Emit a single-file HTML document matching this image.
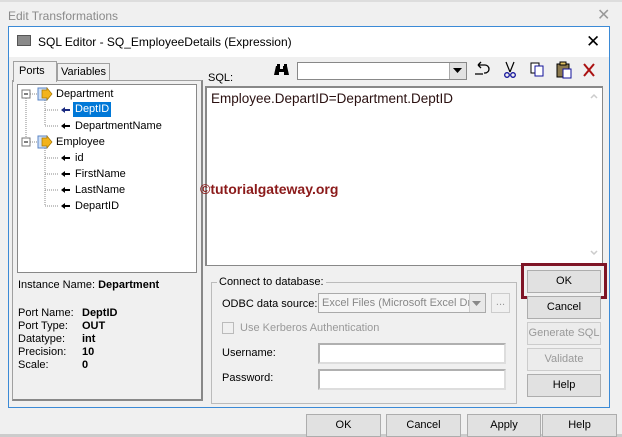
<!DOCTYPE html>
<html><head><style>
*{box-sizing:border-box;margin:0;padding:0}
body{width:622px;height:437px;background:#f0f0f0;font-family:"Liberation Sans",sans-serif;font-size:11px;color:#000;position:relative;overflow:hidden}
.a{position:absolute}
.btn{position:absolute;background:#e1e1e1;border:1px solid #adadad;text-align:center;font-size:11px}
.inp{position:absolute;background:#fff;border:1px solid #a0a0a0}
.lbl{position:absolute;white-space:nowrap}
.b{font-weight:bold}
</style></head><body>
<div class="lbl" style="left:8px;top:9px;font-size:12px;color:#8a8a8a">Edit Transformations</div>
<div class="lbl" style="left:597px;top:5px;font-size:16px;color:#999">✕</div>
<div class="a" style="left:0;top:0;width:622px;height:2px;background:#ddd"></div>

<div class="a" style="left:8px;top:26px;width:602px;height:382px;border:1px solid #3b8ad6;background:#f0f0f0"></div>
<div class="a" style="left:9px;top:27px;width:600px;height:30px;background:#fff"></div>
<div class="a" style="left:17px;top:35px;width:14px;height:11px;background:#8a8a8a;border:1px solid #555"></div>
<div class="lbl" style="left:38px;top:35px;font-size:12px">SQL Editor - SQ_EmployeeDetails (Expression)</div>
<div class="lbl" style="left:586px;top:32px;font-size:17px">✕</div>

<div class="a" style="left:13px;top:61px;width:44px;height:21px;border:1px solid #a0a0a0;border-bottom:none;background:#f0f0f0;z-index:2"></div>
<div class="lbl" style="left:19px;top:65px;z-index:3">Ports</div>
<div class="a" style="left:57px;top:63px;width:53px;height:18px;border:1px solid #a0a0a0;border-bottom:none"></div>
<div class="lbl" style="left:61px;top:66px">Variables</div>
<div class="a" style="left:12px;top:80px;width:191px;height:321px;border:1px solid #a0a0a0;border-right:2px solid #888;border-bottom:2px solid #888"></div>
<div class="a" style="left:17px;top:84px;width:180px;height:189px;background:#fff;border:1px solid #888"></div>
<svg class="a" style="left:17px;top:84px" width="180" height="140">
<g stroke="#888" stroke-dasharray="1,1" fill="none">
<line x1="9" y1="10" x2="9" y2="58"/><line x1="9" y1="10" x2="20" y2="10"/><line x1="9" y1="58" x2="20" y2="58"/>
<line x1="28" y1="16" x2="28" y2="42"/><line x1="28" y1="26" x2="42" y2="26"/><line x1="28" y1="42" x2="42" y2="42"/>
<line x1="28" y1="64" x2="28" y2="122"/><line x1="28" y1="74" x2="42" y2="74"/><line x1="28" y1="90" x2="42" y2="90"/><line x1="28" y1="106" x2="42" y2="106"/><line x1="28" y1="122" x2="42" y2="122"/>
</g>
<g fill="#fff" stroke="#777"><rect x="5" y="6" width="8" height="8"/><rect x="5" y="54" width="8" height="8"/></g>
<g stroke="#000"><line x1="7" y1="10" x2="11" y2="10"/><line x1="7" y1="58" x2="11" y2="58"/></g>
<g><rect x="21" y="4" width="9" height="12" fill="#cfe0f7" stroke="#5b86c5"/><path d="M25 6h5v-2l5 6-5 6v-2h-5z" fill="#f2b31c" stroke="#a67500" stroke-width=".7"/>
<rect x="21" y="52" width="9" height="12" fill="#cfe0f7" stroke="#5b86c5"/><path d="M25 54h5v-2l5 6-5 6v-2h-5z" fill="#f2b31c" stroke="#a67500" stroke-width=".7"/></g>
<g fill="#000"><path d="M44 26l4-3v2h5v2h-5v2z" fill="#1a2a80"/><path d="M44 42l4-3v2h5v2h-5v2z"/><path d="M44 74l4-3v2h5v2h-5v2z"/><path d="M44 90l4-3v2h5v2h-5v2z"/><path d="M44 106l4-3v2h5v2h-5v2z"/><path d="M44 122l4-3v2h5v2h-5v2z"/></g>
</svg>
<div class="lbl" style="left:56px;top:88px">Department</div>
<div class="a" style="left:73px;top:102px;width:38px;height:15px;background:#0078d7"></div>
<div class="lbl" style="left:75px;top:103px;color:#fff">DeptID</div>
<div class="lbl" style="left:75px;top:120px">DepartmentName</div>
<div class="lbl" style="left:56px;top:136px">Employee</div>
<div class="lbl" style="left:75px;top:152px">id</div>
<div class="lbl" style="left:75px;top:168px">FirstName</div>
<div class="lbl" style="left:75px;top:184px">LastName</div>
<div class="lbl" style="left:75px;top:200px">DepartID</div>

<div class="lbl" style="left:18px;top:279px">Instance Name: <span class="b">Department</span></div>
<div class="lbl" style="left:18px;top:307px;line-height:13px">Port Name:<br>Port Type:<br>Datatype:<br>Precision:<br>Scale:</div>
<div class="lbl b" style="left:82px;top:307px;line-height:13px">DeptID<br>OUT<br>int<br>10<br>0</div>

<div class="lbl" style="left:208px;top:72px">SQL:</div>
<svg class="a" style="left:274px;top:63px" width="16" height="14">
<path d="M2 3h4v3h3v-3h4l2 9h-5v-3h-5v3h-5z" fill="#000"/><rect x="3" y="1" width="3" height="3" fill="#000"/><rect x="10" y="1" width="3" height="3" fill="#000"/>
</svg>
<div class="inp" style="left:297px;top:62px;width:170px;height:18px;border-color:#888"></div>
<div class="a" style="left:449px;top:63px;width:17px;height:16px;background:#e1e1e1;border-left:1px solid #aaa"></div>
<svg class="a" style="left:453px;top:68px" width="10" height="6"><path d="M0 0h9l-4.5 5z"/></svg>
<svg class="a" style="left:472px;top:60px" width="140" height="20">
<path d="M3 14h8M6 5h7a4 4 0 0 1 0 8h-1M6 5l3-3M6 5l3 3" stroke="#000" fill="none" stroke-width="1.3"/>
<path d="M34 2l4 10M42 2l-4 10" stroke="#000" stroke-width="1.2"/><circle cx="35" cy="15" r="2.3" fill="none" stroke="#11119a" stroke-width="1.3"/><circle cx="41" cy="15" r="2.3" fill="none" stroke="#11119a" stroke-width="1.3"/>
<rect x="59" y="3" width="8" height="10" fill="#fff" stroke="#000"/><rect x="63" y="6" width="8" height="10" fill="#fff" stroke="#11119a"/>
<rect x="85" y="4" width="12" height="13" fill="#8c7a4e" stroke="#000"/><rect x="88" y="2" width="6" height="3" fill="#e0c060" stroke="#000"/><rect x="91" y="9" width="8" height="9" fill="#fff" stroke="#11119a"/>
<path d="M112 4l10 12M122 4l-10 12" stroke="#a11" stroke-width="2"/>
</svg>
<div class="a" style="left:205px;top:86px;width:398px;height:180px;background:#fff;border:1px solid #888;border-top:2px solid #888;border-left:2px solid #888"></div>
<div class="lbl" style="left:211px;top:91px;font-size:13.5px;color:#2a1010">Employee.DepartID=Department.DeptID</div>
<svg class="a" style="left:589px;top:92px" width="10" height="172"><path d="M2 6l3-3 3 3" stroke="#ccc" fill="none" stroke-width="1.5"/><path d="M2 159l3 3 3-3" stroke="#ccc" fill="none" stroke-width="1.5"/></svg>
<div class="lbl b" style="left:200px;top:181px;font-size:14px;color:#8b1a1a">©tutorialgateway.org</div>

<div class="a" style="left:211px;top:282px;width:306px;height:122px;border:1px solid #bbb"></div>
<div class="lbl" style="left:217px;top:276px;background:#f0f0f0;padding:0 2px">Connect to database:</div>
<div class="lbl" style="left:222px;top:298px">ODBC data source:</div>
<div class="a" style="left:318px;top:293px;width:168px;height:20px;background:#f5f5f5;border:1px solid #aaa"></div>
<div class="lbl" style="left:322px;top:297px;color:#888">Excel Files (Microsoft Excel Driv</div>
<div class="a" style="left:469px;top:294px;width:16px;height:18px;background:#e8e8e8;border-left:1px solid #ccc"></div>
<svg class="a" style="left:472px;top:301px" width="10" height="6"><path d="M0 0h9l-4.5 5z" fill="#888"/></svg>
<div class="btn" style="left:491px;top:293px;width:19px;height:20px;color:#999;background:#f0f0f0;border-color:#ccc;line-height:16px">...</div>
<div class="a" style="left:222px;top:322px;width:12px;height:12px;border:1px solid #bbb;background:#f0f0f0"></div>
<div class="lbl" style="left:240px;top:322px;color:#999">Use Kerberos Authentication</div>
<div class="lbl" style="left:222px;top:347px">Username:</div>
<div class="inp" style="left:318px;top:343px;width:188px;height:21px;border:2px solid #b0b0b0;border-right-color:#ddd;border-bottom-color:#ddd"></div>
<div class="lbl" style="left:222px;top:372px">Password:</div>
<div class="inp" style="left:318px;top:369px;width:188px;height:21px;border:2px solid #b0b0b0;border-right-color:#ddd;border-bottom-color:#ddd"></div>

<div class="a" style="left:521px;top:263px;width:86px;height:36px;border:3px solid #7f1526"></div>
<div class="btn" style="left:527px;top:270px;width:74px;height:23px;line-height:21px">OK</div>
<div class="btn" style="left:527px;top:296px;width:74px;height:23px;line-height:21px">Cancel</div>
<div class="btn" style="left:527px;top:322px;width:74px;height:23px;line-height:21px;color:#999;background:#ececec;border-color:#ccc">Generate SQL</div>
<div class="btn" style="left:527px;top:348px;width:74px;height:23px;line-height:21px;color:#999;background:#ececec;border-color:#ccc">Validate</div>
<div class="btn" style="left:527px;top:374px;width:74px;height:23px;line-height:21px">Help</div>

<div class="a" style="left:0;top:434px;width:622px;height:3px;background:#ccc"></div>
<div class="btn" style="left:306px;top:414px;width:75px;height:23px;line-height:21px">OK</div>
<div class="btn" style="left:386px;top:414px;width:75px;height:23px;line-height:21px">Cancel</div>
<div class="btn" style="left:467px;top:414px;width:74px;height:23px;line-height:21px">Apply</div>
<div class="btn" style="left:542px;top:414px;width:75px;height:23px;line-height:21px">Help</div>
</body></html>
